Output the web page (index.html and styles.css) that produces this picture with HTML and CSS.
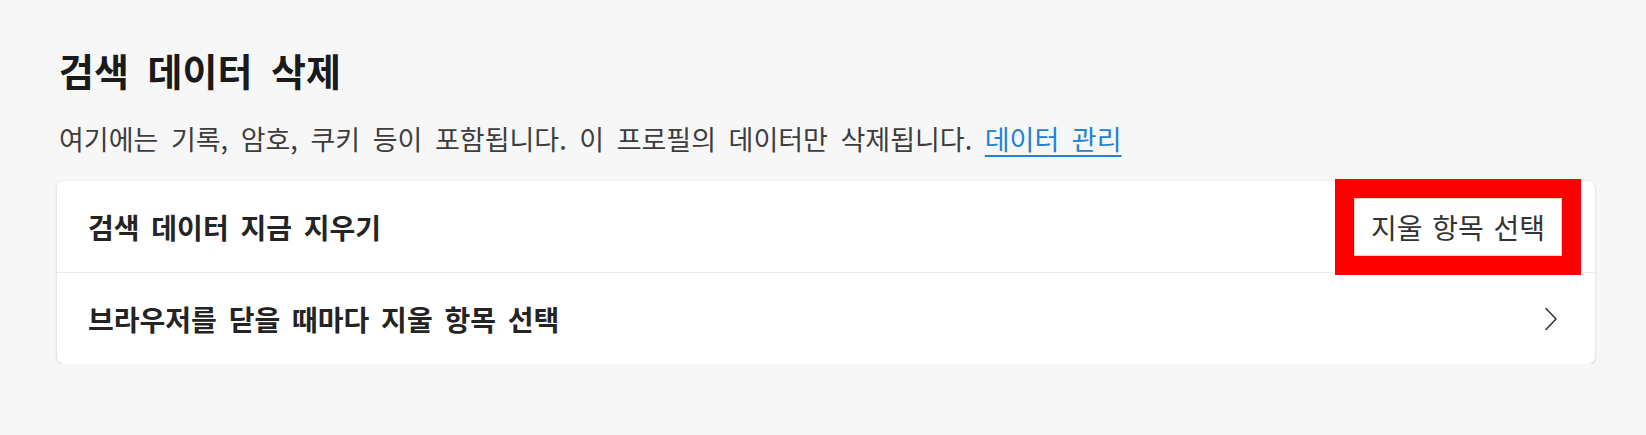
FILE: index.html
```html
<!DOCTYPE html>
<html lang="ko">
<head>
<meta charset="utf-8">
<title>검색 데이터 삭제</title>
<link rel="stylesheet" href="styles.css">
</head>
<body>
<main class="page">
  <h1 class="title">검색 데이터 삭제</h1>
  <p class="desc">여기에는 기록, 암호, 쿠키 등이 포함됩니다. 이 프로필의 데이터만 삭제됩니다. <a class="link" href="#">데이터 관리</a></p>
  <section class="card">
    <div class="row">
      <span class="row-label">검색 데이터 지금 지우기</span>
      <button class="btn" type="button">지울 항목 선택</button>
    </div>
    <div class="row row-nav">
      <span class="row-label">브라우저를 닫을 때마다 지울 항목 선택</span>
      <svg class="chev" width="14" height="24" viewBox="0 0 14 24" aria-hidden="true">
        <path d="M2 1.5 L12 12 L2 22.5" fill="none" stroke="#333" stroke-width="1.6" stroke-linecap="round" stroke-linejoin="round"/>
      </svg>
    </div>
  </section>
</main>
</body>
</html>
```

FILE: styles.css
```css
html, body {
  margin: 0;
  padding: 0;
  background: #f7f7f7;
}

body {
  font-family: "Noto Sans CJK KR", "Noto Sans", sans-serif;
  color: #1b1b1b;
}

.page {
  padding: 46px 0 0 57px;
  width: 1538px;
}

.title {
  margin: 0 0 0 2px;
  font-size: 38px;
  line-height: 48px;
  font-weight: 700;
  word-spacing: 8px;
  color: #1a1a1a;
}

.desc {
  margin: 27px 0 0 2px;
  font-size: 27px;
  line-height: 36px;
  font-weight: 400;
  word-spacing: 5px;
  color: #3d3d3d;
}

.link {
  color: #2283d4;
  text-decoration: underline;
  text-decoration-thickness: 2px;
  text-underline-offset: 5px;
}

.card {
  margin-top: 24px;
  background: #ffffff;
  border-radius: 7px;
  box-shadow: 0 1px 3px rgba(0, 0, 0, 0.16), 0 0 1px rgba(0, 0, 0, 0.08);
}

.row {
  display: flex;
  align-items: center;
  justify-content: space-between;
  height: 91px;
  padding: 0 33px 0 31px;
}

.row + .row {
  border-top: 1px solid #ebebeb;
}

.row-label {
  font-size: 28px;
  font-weight: 600;
  word-spacing: 4px;
  color: #242424;
}

.btn {
  width: 208px;
  height: 58px;
  padding: 0;
  background: #ffffff;
  border: 1px solid #d6d6d6;
  border-radius: 0;
  font-family: "Noto Sans CJK KR", "Noto Sans", sans-serif;
  font-size: 28px;
  font-weight: 400;
  word-spacing: 2px;
  color: #333333;
  outline: 19px solid #ff0000;
}

.row-nav {
  padding-right: 37px;
}

.chev {
  display: block;
}
```
